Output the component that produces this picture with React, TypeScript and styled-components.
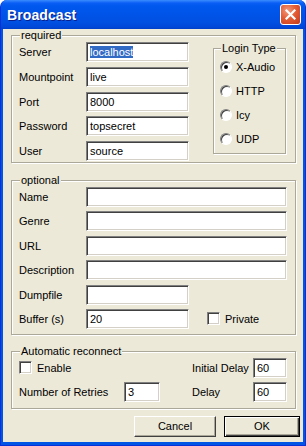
import styled, { createGlobalStyle } from 'styled-components';

const GlobalStyle = createGlobalStyle`
  html, body {
    margin: 0;
    padding: 0;
    background: #ffffff;
  }
  body {
    font-family: "Liberation Sans", Arial, sans-serif;
    font-size: 11px;
    color: #000000;
  }
`;

const Window = styled.div`
  width: 306px;
  height: 446px;
  box-sizing: border-box;
  display: flex;
  flex-direction: column;
  background: #0055e5;
  border-radius: 7px 7px 0 0;
  border: 1px solid #0831d9;
  border-top: none;
  overflow: hidden;
`;

const TitleBar = styled.div`
  height: 29px;
  flex: none;
  display: flex;
  align-items: center;
  justify-content: space-between;
  padding: 0 4px 0 6px;
  background: linear-gradient(
    to bottom,
    #3b8cfe 0px,
    #0a5ef5 3px,
    #0058ee 6px,
    #0054e8 14px,
    #0050e2 22px,
    #0048d8 27px,
    #003fc8 29px
  );
`;

const Title = styled.span`
  font-family: "Liberation Sans", Arial, sans-serif;
  font-weight: bold;
  font-size: 14px;
  color: #ffffff;
  text-shadow: 1px 1px 0 #0a1f8a;
  letter-spacing: 0.1px;
`;

const CloseButton = styled.div`
  width: 21px;
  height: 21px;
  box-sizing: border-box;
  border: 1px solid #ffffff;
  border-radius: 3px;
  background: radial-gradient(circle at 35% 30%, #f29a7d 0%, #e35d35 45%, #c4391a 100%);
  display: flex;
  align-items: center;
  justify-content: center;
`;

const Client = styled.div`
  flex: 1;
  margin: 0 2px 3px 2px;
  background: #ece9d8;
  padding: 0 0 0 8px;
  display: flex;
  flex-direction: column;
`;

const Group = styled.fieldset<{ $width: number; $top: number; $pb: number }>`
  width: ${p => p.$width}px;
  box-sizing: border-box;
  margin: ${p => p.$top}px 0 0 0;
  padding: 0 7px ${p => p.$pb}px 7px;
  border: 1px solid #aca899;
  box-shadow: inset 1px 1px 0 #ffffff, 1px 1px 0 #ffffff;
  min-width: 0;
`;

const Legend = styled.legend`
  padding: 0 1px;
  margin-left: 1px;
  line-height: 13px;
  height: 13px;
  background: #ece9d8;
`;

const RequiredBody = styled.div`
  display: flex;
  align-items: flex-start;
  justify-content: space-between;
`;

const Rows = styled.div<{ $gap: number }>`
  display: flex;
  flex-direction: column;
  gap: ${p => p.$gap}px;
`;

const Row = styled.div`
  display: flex;
  align-items: center;
  height: 20px;
`;

const Label = styled.span<{ $w?: number }>`
  width: ${p => p.$w ?? 67}px;
  flex: none;
  white-space: nowrap;
`;

const Field = styled.div<{ $w: number }>`
  width: ${p => p.$w}px;
  height: 20px;
  box-sizing: border-box;
  background: #ffffff;
  border-top: 1px solid #808080;
  border-left: 1px solid #808080;
  border-right: 1px solid #ffffff;
  border-bottom: 1px solid #ffffff;
  box-shadow: inset 1px 1px 0 #404040, inset -1px -1px 0 #d4d0c8;
  padding: 0 0 0 3px;
  line-height: 18px;
  white-space: nowrap;
  overflow: hidden;
  flex: none;
`;

const Selected = styled.span`
  background: #316ac5;
  color: #ffffff;
`;

const LoginGroup = styled.fieldset`
  width: 73px;
  box-sizing: border-box;
  margin: 0 2px 0 0;
  padding: 0 4px 2px 6px;
  border: 1px solid #aca899;
  box-shadow: inset 1px 1px 0 #ffffff, 1px 1px 0 #ffffff;
  min-width: 0;
`;

const RadioRow = styled.label`
  display: flex;
  align-items: center;
  gap: 4px;
  height: 24px;
`;

const Radio = styled.span<{ $checked?: boolean }>`
  width: 12px;
  height: 12px;
  box-sizing: border-box;
  border-radius: 50%;
  border: 1px solid;
  border-color: #808080 #ffffff #ffffff #808080;
  background: #ffffff;
  box-shadow: inset 1px 1px 0 #404040;
  display: flex;
  align-items: center;
  justify-content: center;
  flex: none;

  &::after {
    content: '';
    width: 4px;
    height: 4px;
    border-radius: 50%;
    background: ${p => (p.$checked ? '#000000' : 'transparent')};
  }
`;

const Check = styled.span`
  width: 13px;
  height: 13px;
  box-sizing: border-box;
  background: #ffffff;
  border-top: 1px solid #808080;
  border-left: 1px solid #808080;
  border-right: 1px solid #ffffff;
  border-bottom: 1px solid #ffffff;
  box-shadow: inset 1px 1px 0 #404040, inset -1px -1px 0 #d4d0c8;
  flex: none;
`;

const CheckLabel = styled.label<{ $ml?: number }>`
  display: flex;
  align-items: center;
  gap: 5px;
  margin-left: ${p => p.$ml ?? 0}px;
`;

const ReconnectGrid = styled.div`
  display: grid;
  grid-template-columns: 105px 36px 32px 61px 34px;
  grid-auto-rows: 20px;
  row-gap: 4px;
  align-items: center;
`;

const Span2 = styled.div`
  grid-column: span 2;
`;

const Buttons = styled.div`
  display: flex;
  gap: 8px;
  margin: 7px 0 0 123px;
`;

const Button = styled.button<{ $default?: boolean; $w: number }>`
  width: ${p => p.$w}px;
  height: ${p => (p.$default ? 21 : 21)}px;
  box-sizing: border-box;
  font-family: "Liberation Sans", Arial, sans-serif;
  font-size: 11px;
  color: #000000;
  background: #ece9d8;
  padding: 0;
  border: 1px solid;
  border-color: ${p => (p.$default ? '#000000' : '#ffffff #404040 #404040 #ffffff')};
  box-shadow: ${p =>
    p.$default
      ? 'inset 1px 1px 0 #ffffff, inset -1px -1px 0 #404040, inset -2px -2px 0 #aca899'
      : 'inset -1px -1px 0 #aca899'};
`;

const App = () => {
  return (
    <>
      <GlobalStyle />
      <Window>
        <TitleBar>
          <Title>Broadcast</Title>
          <CloseButton>
            <svg width="11" height="11" viewBox="0 0 11 11">
              <path d="M1.5 1.5 L9.5 9.5 M9.5 1.5 L1.5 9.5" stroke="#ffffff" strokeWidth="2.2" strokeLinecap="square" />
            </svg>
          </CloseButton>
        </TitleBar>

        <Client>
          <Group $width={285} $top={0} $pb={1}>
            <Legend>required</Legend>
            <RequiredBody>
              <Rows $gap={4.75}>
                <Row>
                  <Label>Server</Label>
                  <Field $w={103}><Selected>localhost</Selected></Field>
                </Row>
                <Row>
                  <Label>Mountpoint</Label>
                  <Field $w={103}>live</Field>
                </Row>
                <Row>
                  <Label>Port</Label>
                  <Field $w={103}>8000</Field>
                </Row>
                <Row>
                  <Label>Password</Label>
                  <Field $w={103}>topsecret</Field>
                </Row>
                <Row>
                  <Label>User</Label>
                  <Field $w={103}>source</Field>
                </Row>
              </Rows>

              <LoginGroup>
                <Legend>Login Type</Legend>
                <RadioRow><Radio $checked />X-Audio</RadioRow>
                <RadioRow><Radio />HTTP</RadioRow>
                <RadioRow><Radio />Icy</RadioRow>
                <RadioRow><Radio />UDP</RadioRow>
              </LoginGroup>
            </RequiredBody>
          </Group>

          <Group $width={285} $top={11} $pb={5}>
            <Legend>optional</Legend>
            <Rows $gap={4.4}>
              <Row>
                <Label>Name</Label>
                <Field $w={201} />
              </Row>
              <Row>
                <Label>Genre</Label>
                <Field $w={201} />
              </Row>
              <Row>
                <Label>URL</Label>
                <Field $w={201} />
              </Row>
              <Row>
                <Label>Description</Label>
                <Field $w={201} />
              </Row>
              <Row>
                <Label>Dumpfile</Label>
                <Field $w={103} />
              </Row>
              <Row>
                <Label>Buffer (s)</Label>
                <Field $w={103}>20</Field>
                <CheckLabel $ml={18}><Check />Private</CheckLabel>
              </Row>
            </Rows>
          </Group>

          <Group $width={285} $top={10} $pb={6}>
            <Legend>Automatic reconnect</Legend>
            <ReconnectGrid>
              <Span2>
                <CheckLabel><Check />Enable</CheckLabel>
              </Span2>
              <span />
              <Label $w={61}>Initial Delay</Label>
              <Field $w={34}>60</Field>
              <Label $w={105}>Number of Retries</Label>
              <Field $w={36}>3</Field>
              <span />
              <Label $w={61}>Delay</Label>
              <Field $w={34}>60</Field>
            </ReconnectGrid>
          </Group>

          <Buttons>
            <Button $w={82}>Cancel</Button>
            <Button $w={76} $default>OK</Button>
          </Buttons>
        </Client>
      </Window>
    </>
  );
};

export default App;
